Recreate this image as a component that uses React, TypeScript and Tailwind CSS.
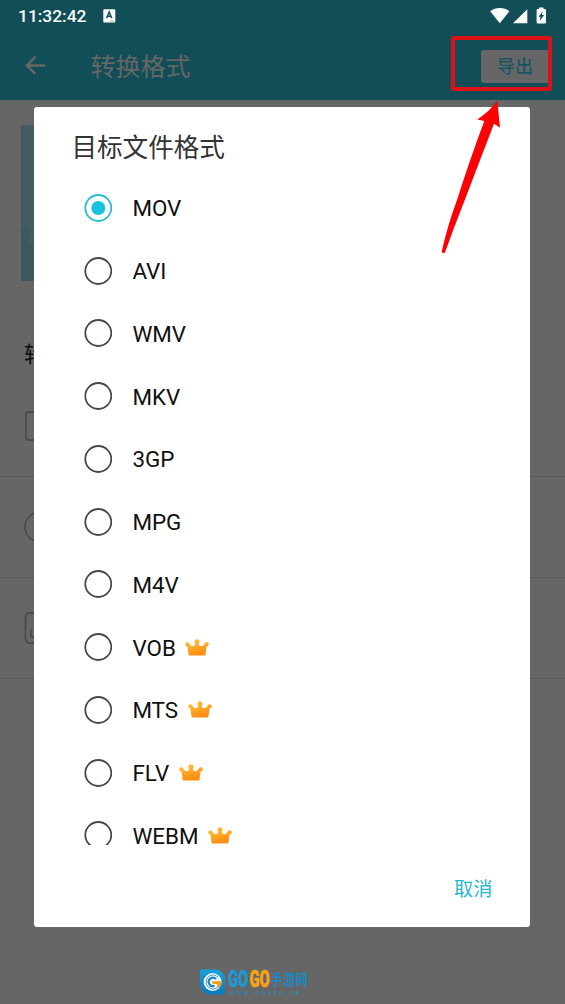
import clsx from "clsx";
import { useState } from "react";

type Format = {
  name: string;
  vip?: boolean;
};

const FORMATS: Format[] = [
  { name: "MOV" },
  { name: "AVI" },
  { name: "WMV" },
  { name: "MKV" },
  { name: "3GP" },
  { name: "MPG" },
  { name: "M4V" },
  { name: "VOB", vip: true },
  { name: "MTS", vip: true },
  { name: "FLV", vip: true },
  { name: "WEBM", vip: true },
];

function StatusBar() {
  return (
    <div className="flex h-8 items-center justify-between px-[18px] text-white">
      <div className="flex items-center">
        <span className="w-[70px] text-[17.4px] leading-8 font-medium whitespace-nowrap">
          11:32:42
        </span>
        <svg className="ml-[15px]" width="13" height="14" viewBox="0 0 13 14">
          <rect x="0.3" y="0.3" width="12" height="13.2" rx="1.2" fill="#fff" />
          <path
            d="M3.6 9.2 6.2 3l2.6 6.2M4.5 7.2h3.4"
            fill="none"
            stroke="#114e58"
            strokeWidth="1.5"
          />
          <path d="M6.5 11.9h4.5" stroke="#8fb0b5" strokeWidth="0.8" />
        </svg>
      </div>
      <svg className="-mt-px" width="57" height="18" viewBox="0 0 57 18" fill="#fff">
        <path d="M.2 4.2C5.8-.2 13.8-.2 19.4 4.2L9.8 16.3Z" />
        <path d="M23 16.3 37.3 2.3v14Z" />
        <path d="M49 .4h4.5v1.7h1.3q1.2 0 1.2 1.2v12q0 1.2-1.2 1.2h-7q-1.2 0-1.2-1.2v-12q0-1.2 1.2-1.2H49Z" />
        <path d="M52.8 4.2 48.5 9.7h2l-.8 4.3 4.400-5.900h-2.200Z" fill="#114e58" />
      </svg>
    </div>
  );
}

function Toolbar() {
  return (
    <div className="flex h-[68px] items-center text-[#666]">
      <svg
        className="ml-[25px] shrink-0"
        width="21"
        height="20"
        viewBox="0 0 21 20"
        fill="none"
        stroke="currentColor"
        strokeWidth="2.4"
      >
        <path d="M20 9.500H2M10.500.8 1.800 9.500l8.700 8.700" />
      </svg>
      <h1 className="mt-[2px] ml-[44.5px] text-[25px] leading-none">转换格式</h1>
      <button className="mr-[16px] ml-auto flex h-[33px] w-[68px] items-center justify-center rounded-[3px] bg-[#666] text-[18px] font-medium text-[#185762]">
        导出
      </button>
    </div>
  );
}

function OptionRow({ children }: { children: React.ReactNode }) {
  return (
    <div className="flex h-[101px] items-center border-b border-[#575757] pl-6">
      <svg
        width="32"
        height="32"
        viewBox="0 0 32 32"
        fill="none"
        stroke="#4c4c4c"
        strokeWidth="1.8"
      >
        {children}
      </svg>
    </div>
  );
}

function Radio({ checked }: { checked: boolean }) {
  return (
    <svg className="shrink-0" width="28" height="28" viewBox="0 0 28 28">
      <circle
        cx="14.3"
        cy="14"
        r="13"
        fill="none"
        strokeWidth="1.8"
        className={clsx(checked ? "stroke-[#25bdd0]" : "stroke-[#484848]")}
      />
      {checked && <circle cx="14.3" cy="14" r="7" fill="#16c2da" />}
    </svg>
  );
}

function Crown() {
  return (
    <svg width="24" height="17" viewBox="0 0 24 17">
      <defs>
        <linearGradient id="crown" x1="0" y1="0" x2="0.4" y2="1">
          <stop offset="0" stopColor="#ffc83a" />
          <stop offset="1" stopColor="#ff8c14" />
        </linearGradient>
      </defs>
      <path
        d="M3.7 16.5 2.4 7.600A2.200 2.200 0 1 1 4.600 5.200Q6.500 7.800 8.700 6.900q1.700-.7 1.500-2.300A2.500 2.500 0 1 1 13.800 4.600q-.2 1.600 1.500 2.300 2.200.9 4.100-1.700A2.200 2.200 0 1 1 21.600 7.600L20.300 16.500Z"
        fill="url(#crown)"
      />
    </svg>
  );
}

function Watermark() {
  return (
    <div className="absolute top-[969px] left-[200px] flex">
      <svg width="25" height="26" viewBox="0 0 25 26">
        <defs>
          <linearGradient id="badge" x1="0" y1="0" x2="0" y2="1">
            <stop offset="0" stopColor="#1ba0dc" />
            <stop offset="1" stopColor="#0879be" />
          </linearGradient>
        </defs>
        <path d="M0 .5h15Q25 1 25 11v14.500H12Q1 25 0 14Z" fill="url(#badge)" />
        <circle cx="12.6" cy="13" r="9" fill="#f4f8fa" />
        <path
          d="M18 8A7 7 0 1 0 18 18"
          fill="none"
          stroke="#2c93cc"
          strokeWidth="0.9"
        />
        <path
          d="M16 10A4.2 4.200 0 1 0 14.500 16.800"
          fill="none"
          stroke="#1687c4"
          strokeWidth="2.2"
        />
        <path d="M11.500 12.300H22q-.5 5-4.500 7l-.5-4.300h-4Z" fill="#f39a16" />
      </svg>
      <div className="ml-[3px] w-[82px]">
        <div className="flex h-[20px] items-center leading-[20px] whitespace-nowrap">
          <svg
            width="42"
            height="20"
            viewBox="0 0 42 20"
            className="shrink-0 overflow-visible font-black"
            fontSize="23"
            strokeWidth="0.5"
          >
            <text
              x="0.3"
              y="18"
              textLength="20"
              lengthAdjust="spacingAndGlyphs"
              fill="#1c98d4"
              stroke="#1c98d4"
            >
              GO
            </text>
            <text
              x="21.5"
              y="18"
              textLength="20.3"
              lengthAdjust="spacingAndGlyphs"
              fill="#f7a413"
              stroke="#f7a413"
            >
              GO
            </text>
          </svg>
          <svg
            width="38"
            height="20"
            viewBox="0 0 38 20"
            className="shrink-0 overflow-visible font-bold"
            fontSize="15"
          >
            <text
              x="0.8"
              y="15.6"
              textLength="37"
              lengthAdjust="spacingAndGlyphs"
              fill="#1f86bd"
            >
              手游网
            </text>
          </svg>
        </div>
        <div className="pt-px pl-[2px] text-[5px] leading-[6px] font-bold tracking-[2.8px] whitespace-nowrap text-[#2f86b0]">
          WWW.GO9GO.CN
        </div>
      </div>
    </div>
  );
}

export default function App() {
  const [selected, setSelected] = useState("MOV");

  return (
    <div className="relative h-[1004px] w-[565px] overflow-hidden bg-[#666] font-[Roboto,'Noto_Sans_CJK_SC',sans-serif]">
      <header className="bg-[#114e58]">
        <StatusBar />
        <Toolbar />
      </header>

      {/* dimmed page behind the dialog */}
      <main>
        <div className="mt-[25px] ml-[21px] flex h-[156px] w-[200px] flex-col bg-[#445c61]">
          <div className="mt-auto h-[54px] bg-[#3c5860]">
            <div className="ml-2 h-4 bg-[#445c61]" />
          </div>
        </div>
        <h2 className="mt-[58px] pl-6 text-[22px] leading-8 text-[#0c0c0c]">
          转换设置
        </h2>
        <div className="mt-[5px]">
          <OptionRow>
            <rect x="2" y="2" width="28" height="28" rx="2" />
            <path d="M12 10v12l9-6Z" />
          </OptionRow>
          <OptionRow>
            <circle cx="16" cy="16" r="15" />
            <path d="M16 8v8h6" />
          </OptionRow>
          <OptionRow>
            <rect x="1.5" y="1" width="29" height="30" rx="4" />
            <path d="M7 17v8h5" />
          </OptionRow>
        </div>
      </main>

      <section className="absolute top-[107px] left-[34.4px] flex h-[820px] w-[496px] flex-col rounded-[3px] bg-white">
        <h2 className="mt-[25px] ml-[37px] text-[25.6px] leading-8 text-[#333]">
          目标文件格式
        </h2>
        <div className="mt-[12.5px] h-[668.5px] overflow-hidden pl-[50px]">
          {FORMATS.map((f) => (
            <button
              key={f.name}
              onClick={() => setSelected(f.name)}
              className="flex h-[62.75px] w-full items-center"
            >
              <Radio checked={selected === f.name} />
              <span className="ml-5 pt-px text-[22.4px] leading-7 text-[#111]">
                {f.name}
              </span>
              {f.vip && (
                <span className="ml-[9.5px]">
                  <Crown />
                </span>
              )}
            </button>
          ))}
        </div>
        <button className="mt-[31px] mr-[38px] self-end text-[19.2px] leading-7 text-[#28b7ca]">
          取消
        </button>
      </section>

      <Watermark />

      {/* highlight around the export button */}
      <div className="absolute top-[36px] left-[451px] h-[55px] w-[101px] rounded-[3px] border-4 border-[#dc1217]" />
      <svg
        className="absolute top-[98px] left-[438px]"
        width="66"
        height="160"
        viewBox="0 0 66 160"
      >
        <path
          d="M59.3 2.5 62 29.700 56 25.700Q42 62 26.800 102 16 129 7 154.500 5 156.500 3.700 153.500 10 126 19 102 31 64 46.300 23L39.300 21.500Q52 13 59.300 2.500Z"
          fill="#fb0204"
        />
      </svg>
    </div>
  );
}
